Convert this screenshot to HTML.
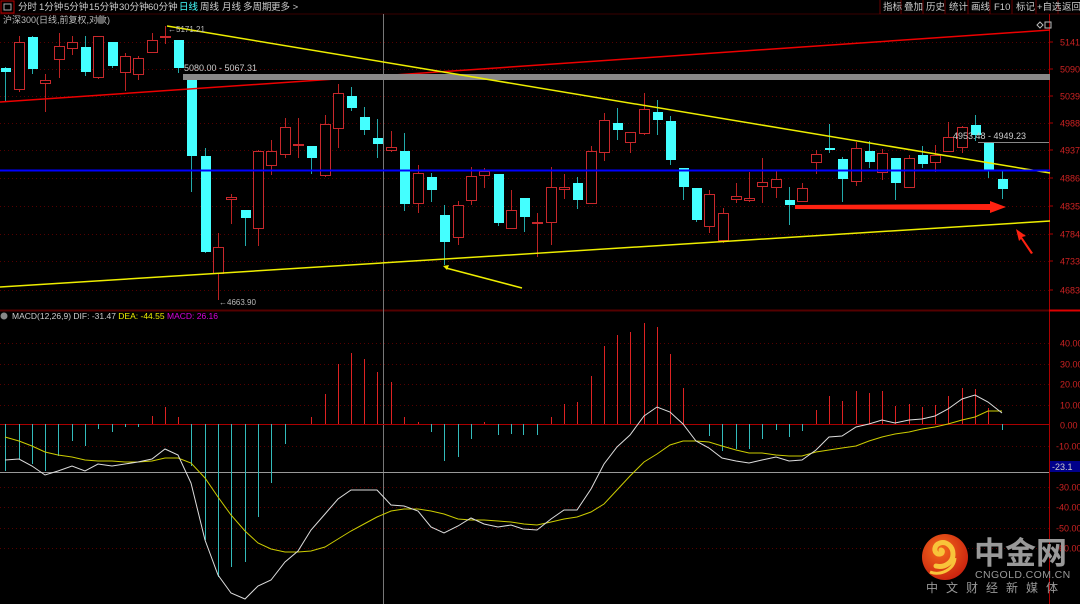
<!DOCTYPE html>
<html><head><meta charset="utf-8"><style>
html,body{margin:0;padding:0;background:#000;width:1080px;height:604px;overflow:hidden}
body{font-family:"Liberation Sans","Noto Sans CJK SC",sans-serif;position:relative}
svg{position:absolute;left:0;top:0}
</style></head><body>
<svg id="s" width="1080" height="604" xmlns="http://www.w3.org/2000/svg" font-family="Liberation Sans, Noto Sans CJK SC, sans-serif">
<rect width="1080" height="604" fill="#000"/>
<rect x="0" y="0" width="1080" height="14" fill="#000"/>
<line x1="0" y1="14" x2="1080" y2="14" stroke="#3a0000"/>
<rect x="1" y="1" width="13" height="12" fill="none" stroke="#b00"/>
<rect x="4" y="4" width="7" height="6" fill="none" stroke="#aaa"/>
<g font-size="9.5" fill="#ccc">
<text x="18" y="10">分时</text><text x="39" y="10">1分钟</text><text x="64" y="10">5分钟</text><text x="89" y="10">15分钟</text><text x="119" y="10">30分钟</text><text x="148" y="10">60分钟</text><text x="179" y="10" fill="#4ff">日线</text><text x="200" y="10">周线</text><text x="222" y="10">月线</text><text x="243" y="10">多周期</text><text x="271" y="10">更多 &gt;</text>
</g>
<g stroke="#600" fill="none">
<line x1="880" y1="0" x2="880" y2="14"/><line x1="901" y1="0" x2="901" y2="14"/><line x1="923" y1="0" x2="923" y2="14"/><line x1="945" y1="0" x2="945" y2="14"/><line x1="968" y1="0" x2="968" y2="14"/><line x1="990" y1="0" x2="990" y2="14"/><line x1="1012" y1="0" x2="1012" y2="14"/><line x1="1036" y1="0" x2="1036" y2="14"/><line x1="1058" y1="0" x2="1058" y2="14"/>
</g>
<g font-size="9.5" fill="#ccc">
<text x="883" y="10">指标</text><text x="904" y="10">叠加</text><text x="926" y="10">历史</text><text x="949" y="10">统计</text><text x="971" y="10">画线</text><text x="994" y="10">F10</text><text x="1016" y="10">标记</text><text x="1037" y="10">+自选</text><text x="1062" y="10">返回</text>
</g>
<text x="3" y="23" font-size="9" fill="#bbb">沪深300(日线,前复权,对数)</text>
<circle cx="101" cy="20" r="4" fill="#666"/>
<line x1="1049.5" y1="14" x2="1049.5" y2="604" stroke="#a00"/>
<line x1="0" y1="310.5" x2="1049" y2="310.5" stroke="#500" stroke-width="2"/>
<line x1="1049" y1="310.5" x2="1080" y2="310.5" stroke="#d00" stroke-width="2"/>
<g id="grid" stroke="#500" stroke-dasharray="1,3"></g>
<g id="ax" font-size="9" fill="#c22"></g>
<path d="M1040 22l3 3-3 3-3-3z" fill="none" stroke="#bbb"/>
<rect x="1045" y="22" width="6" height="6" fill="none" stroke="#bbb"/>
<g id="cd"></g>
<line x1="383.5" y1="14" x2="383.5" y2="604" stroke="#777"/>
<line x1="0" y1="102" x2="1050" y2="30" stroke="#e00" stroke-width="1.5"/>
<rect x="183" y="74" width="867" height="6" fill="#888"/>
<text x="184" y="71" font-size="9" fill="#ccc">5080.00 - 5067.31</text>
<line x1="978" y1="142.5" x2="1049" y2="142.5" stroke="#888"/>
<text x="953" y="139" font-size="9" fill="#ccc">4953.48 - 4949.23</text>
<line x1="167" y1="26" x2="1050" y2="173" stroke="#ee0" stroke-width="1.5"/>
<line x1="0" y1="287" x2="1050" y2="221" stroke="#ee0" stroke-width="1.5"/>
<line x1="0" y1="170.5" x2="1050" y2="170.5" stroke="#00f" stroke-width="2"/>
<line x1="446" y1="268" x2="522" y2="288" stroke="#ee0" stroke-width="1.5"/>
<path d="M443 266l6 -1 -2 5z" fill="#ee0"/>
<path d="M795 205 L990 204 L990 201 L1006 207 L990 213 L990 210 L795 209z" fill="#f21"/>
<path d="M1033 253 L1022 237 L1026 236 L1016 229 L1019 241 L1021 239 L1031 254z" fill="#f21"/>
<text x="168" y="32" font-size="8" fill="#bbb">←5171.21</text>
<text x="219" y="305" font-size="8" fill="#bbb">←4663.90</text>
<circle cx="4" cy="316" r="3.5" fill="#888"/>
<text x="12" y="319" font-size="8.5" fill="#ccc">MACD(12,26,9) DIF: -31.47 <tspan fill="#ee0">DEA: -44.55</tspan> <tspan fill="#d0d">MACD: 26.16</tspan></text>
<line x1="0" y1="424.5" x2="1049" y2="424.5" stroke="#a00"/>
<line x1="0" y1="472.5" x2="1049" y2="472.5" stroke="#999"/>
<g id="mb"></g>
<polyline id="dea" fill="none" stroke="#cc0" stroke-width="1"/>
<polyline id="dif" fill="none" stroke="#ddd" stroke-width="1"/>
<rect x="1050" y="461" width="30" height="11" fill="#00008b"/>
<text x="1052" y="470" font-size="9" fill="#ccc">-23.1</text>
<defs><radialGradient id="lg" cx="0.4" cy="0.35" r="0.7"><stop offset="0" stop-color="#f46a1c"/><stop offset="1" stop-color="#c8200e"/></radialGradient></defs>
<circle cx="945" cy="557" r="23" fill="url(#lg)"/>
<path d="M936 566c8 2 17-3 17-12 0-8-7-13-13-11-6 2-7 9-2 11 4 1 6-3 3-4" fill="none" stroke="#f8c43a" stroke-width="5" stroke-linecap="round"/>
<path d="M930 572c10 4 24-2 25-14" fill="none" stroke="#f8c43a" stroke-width="3"/>
<text x="974" y="564" font-size="31" font-weight="bold" fill="#999" font-family="Noto Sans CJK SC, sans-serif">中金网</text>
<text x="975" y="578" font-size="10.5" fill="#999" letter-spacing="0.4">CNGOLD.COM.CN</text>
<text x="926" y="592" font-size="12" fill="#999" letter-spacing="8" font-family="Noto Sans CJK SC, sans-serif">中文财经新媒体</text>
</svg>
<script>
var NS="http://www.w3.org/2000/svg";
function el(p,t,a){var e=document.createElementNS(NS,t);for(var k in a)e.setAttribute(k,a[k]);p.appendChild(e);return e;}
var g=document.getElementById('grid'),ax=document.getElementById('ax');
var L=[[42,"5141"],[69,"5090"],[96,"5039"],[123,"4988"],[150,"4937"],[178,"4886"],[206,"4835"],[234,"4784"],[261,"4733"],[290,"4683"]];
L.forEach(function(l){el(g,'line',{x1:0,y1:l[0]+.5,x2:1049,y2:l[0]+.5});el(ax,'line',{x1:1049,y1:l[0],x2:1053,y2:l[0],stroke:'#a00'});var t=el(ax,'text',{x:1060,y:l[0]+3.5});t.textContent=l[1];});
var M=[[343,"40.00"],[364,"30.00"],[384,"20.00"],[405,"10.00"],[425,"0.00"],[446,"-10.00"],[487,"-30.00"],[507,"-40.00"],[528,"-50.00"],[548,"-60.00"]];
M.forEach(function(l){if(l[0]!=425)el(g,'line',{x1:0,y1:l[0]+.5,x2:1049,y2:l[0]+.5});var t=el(ax,'text',{x:l[1].length>5?1056:1060,y:l[0]+3.5});t.textContent=l[1];});
var C=[[5,68,72,67,101,0],[19,42,89,36,92,1],[32,37,69,36,74,0],[45,80,83,74,112,1],[59,46,59,33,78,1],[72,42,48,36,55,1],[85,47,72,36,76,0],[98,36,77,36,79,1],[112,42,66,42,68,0],[125,56,72,53,91,1],[138,58,74,56,80,1],[152,40,52,33,52,1],[165,36,37,26,44,1],[178,40,68,40,73,0],[191,79,156,79,192,0],[205,156,252,148,253,0],[218,247,273,233,300,1],[231,197,199,194,224,1],[245,210,218,210,246,0],[258,151,228,150,246,1],[271,151,165,140,175,1],[285,127,154,118,158,1],[298,144,145,118,158,1],[311,146,158,146,174,0],[325,124,175,115,177,1],[338,93,128,84,148,1],[351,96,108,87,111,0],[364,117,130,107,135,0],[377,138,144,119,158,0],[391,147,150,131,152,1],[404,151,204,133,211,0],[418,173,203,165,213,1],[431,177,190,173,202,0],[444,215,242,205,265,0],[458,205,237,201,245,1],[471,176,200,167,205,1],[484,171,175,168,188,1],[498,174,223,174,226,0],[511,210,228,190,229,1],[524,198,217,198,232,0],[537,222,223,213,257,1],[551,187,222,167,245,1],[564,187,189,174,199,1],[577,183,200,177,209,0],[591,151,203,146,203,1],[604,120,152,113,161,1],[617,123,130,108,140,0],[630,132,142,132,153,1],[644,109,133,93,135,1],[657,112,120,100,135,0],[670,121,160,116,165,0],[683,168,187,168,200,0],[696,188,220,188,222,0],[709,194,226,190,233,1],[723,213,240,208,243,1],[736,196,199,183,203,1],[749,198,200,172,202,1],[762,182,186,158,203,1],[776,179,187,171,198,1],[789,200,205,187,225,0],[802,188,201,183,201,1],[816,154,162,150,174,1],[829,148,150,124,153,0],[842,159,179,157,202,0],[856,148,181,142,186,1],[869,151,162,141,168,0],[882,153,172,149,180,1],[895,158,183,158,200,0],[909,158,187,155,187,1],[922,155,164,146,168,0],[935,155,162,145,172,1],[948,137,151,122,151,1],[962,127,147,126,153,1],[975,125,135,115,141,0],[988,143,170,143,178,0],[1002,179,189,170,199,0]];
var cd=document.getElementById('cd');
C.forEach(function(c){var x=c[0],col=c[5]?'#c8282c':'#4ff';
el(cd,'line',{x1:x+.5,y1:c[3],x2:x+.5,y2:c[4],stroke:c[5]?'#b22':'#2aa'});
if(c[5])el(cd,'rect',{x:x-4.5,y:c[1]+.5,width:10,height:Math.max(1,c[2]-c[1]),fill:'#000',stroke:col});
else el(cd,'rect',{x:x-4,y:c[1],width:10,height:Math.max(2,c[2]-c[1]),fill:col});});
var B=[[5,471],[19,459],[32,464],[45,471],[58,456],[72,441],[85,446],[98,429],[112,432],[125,427],[138,427],[152,416],[165,407],[178,417],[191,466],[205,540],[218,577],[231,567],[245,562],[258,517],[271,483],[285,444],[311,417],[325,394],[338,364],[351,353],[364,359],[377,372],[391,382],[404,417],[418,422],[431,432],[444,461],[458,457],[471,439],[484,422],[498,435],[511,434],[523,435],[537,435],[551,417],[564,404],[577,402],[591,376],[604,346],[617,335],[630,332],[644,323],[657,327],[670,354],[683,388],[709,436],[722,451],[736,449],[749,449],[762,439],[776,430],[789,437],[802,431],[816,410],[829,396],[842,401],[856,391],[869,393],[882,391],[895,406],[909,404],[922,407],[935,405],[948,396],[962,388],[975,389],[988,408],[1002,430]];
var mb=document.getElementById('mb');
B.forEach(function(b){var up=b[1]<424;el(mb,'line',{x1:b[0]+.5,y1:424,x2:b[0]+.5,y2:b[1],stroke:up?'#d22':'#3bb'});});
var DIF=[[5,460],[19,459],[32,466],[45,475],[58,471],[72,466],[85,471],[98,464],[112,466],[125,464],[138,462],[152,459],[165,449],[178,455],[191,483],[205,540],[218,575],[231,593],[245,599],[258,586],[271,580],[285,562],[298,551],[311,530],[325,514],[338,499],[351,490],[364,490],[377,490],[391,505],[404,506],[418,511],[431,527],[444,533],[458,526],[471,518],[484,524],[498,527],[511,525],[523,529],[537,530],[551,519],[564,510],[577,510],[591,489],[604,464],[617,447],[630,435],[644,416],[657,407],[670,412],[683,424],[696,441],[709,448],[722,458],[736,461],[749,463],[762,460],[776,457],[789,461],[802,460],[816,450],[829,437],[842,436],[856,427],[869,424],[882,420],[895,423],[909,420],[922,419],[935,416],[948,409],[962,399],[975,395],[988,402],[1002,413]];
var DEA=[[5,437],[19,441],[32,446],[45,452],[58,455],[72,457],[85,460],[98,461],[112,461],[125,462],[138,462],[152,461],[165,458],[178,458],[191,463],[205,478],[218,497],[231,515],[245,531],[258,543],[271,549],[285,552],[298,552],[311,551],[325,547],[338,539],[351,531],[364,524],[377,517],[391,511],[404,509],[418,509],[431,511],[444,514],[458,519],[471,520],[484,520],[498,521],[511,522],[524,524],[537,525],[551,522],[564,519],[577,517],[591,512],[604,504],[617,490],[630,476],[644,462],[657,454],[670,445],[683,441],[696,441],[709,442],[722,446],[736,450],[749,453],[762,453],[776,455],[789,456],[802,456],[816,452],[829,450],[842,448],[856,446],[869,441],[882,437],[895,434],[909,432],[922,429],[935,427],[948,424],[962,420],[975,417],[988,411],[1002,411]];
document.getElementById('dif').setAttribute('points',DIF.map(function(p){return p.join(',')}).join(' '));
document.getElementById('dea').setAttribute('points',DEA.map(function(p){return p.join(',')}).join(' '));
</script>
</body></html>
